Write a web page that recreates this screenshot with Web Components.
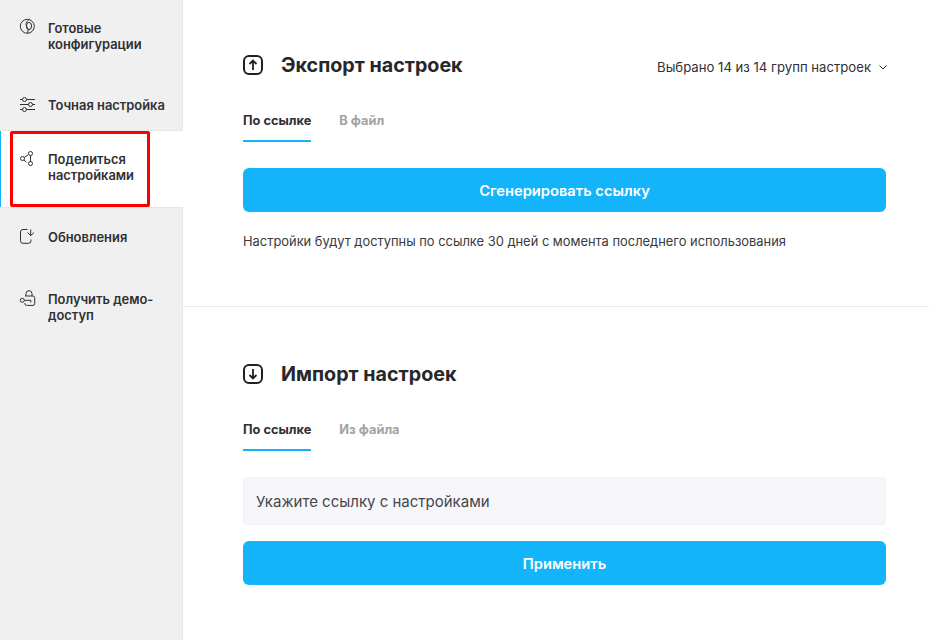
<!DOCTYPE html>
<html lang="ru">
<head>
<meta charset="utf-8">
<title>Настройки</title>
<style>
    html, body {
        margin: 0;
        height: 100%;
    }

    body {
        font-family: Inter, "Noto Sans", sans-serif;
        color: #26272b;
        overflow: hidden;
    }
</style>
</head>
<body>
<settings-page>
    <side-nav>
        <nav-item>
            <svg slot="icon" width="18" height="18" viewBox="0 0 18 18" fill="none" stroke="currentColor" stroke-width="1"><circle cx="7.300" cy="6.300" r="7"/><ellipse cx="9" cy="6" rx="2.600" ry="3.600"/><path d="M9.500 -.5C6.500 1 5.500 3.500 6.500 6s2.500 4 1 7"/></svg>
            Готовые<br>конфигурации
        </nav-item>
        <nav-item>
            <svg slot="icon" width="18" height="18" viewBox="0 0 18 18" fill="none" stroke="currentColor" stroke-width="1"><path d="M0 2.500h2.500M6.500 2.500H15M0 7.500h8.500M12.500 7.500H15M0 12.500h2.500M6.500 12.500H15"/><circle cx="4.500" cy="2.500" r="2"/><circle cx="10.500" cy="7.500" r="2"/><circle cx="4.500" cy="12.500" r="2"/></svg>
            Точная настройка
        </nav-item>
        <nav-item active>
            <svg slot="icon" width="18" height="18" viewBox="0 0 18 18" fill="none" stroke="currentColor" stroke-width="1"><circle cx="2.500" cy="7.500" r="2"/><circle cx="10.500" cy="2.500" r="2"/><circle cx="10.500" cy="12.500" r="2"/><path d="M4.200 6.400 8 4M4 9l2.500 2.300M10.500 4.500v6"/></svg>
            Поделиться<br>настройками
        </nav-item>
        <nav-item>
            <svg slot="icon" width="18" height="18" viewBox="0 0 18 18" fill="none" stroke="currentColor" stroke-width="1"><path d="M7.500 .5H3a2.500 2.500 0 0 0-2.500 2.500v8.800a2.500 2.500 0 0 0 2.500 2.500h5.500a2.500 2.500 0 0 0 2.500-2.500V10.500"/><path d="M10.700 .5V6.500M7.500 3.500l3.200 3.200L14 3.500"/></svg>
            Обновления
        </nav-item>
        <nav-item>
            <svg slot="icon" width="18" height="18" viewBox="0 0 18 18" fill="none" stroke="currentColor" stroke-width="1"><path d="M6 5V2.700a3 3 0 0 1 6 0V5"/><path d="M5 5h8a1.700 1.700 0 0 1 1.700 1.700v6a1.700 1.700 0 0 1-1.700 1.700H6.500a1.500 1.500 0 0 1-1.500-1.500v-.9"/><circle cx="2.300" cy="9.300" r="2"/><path d="M4.300 9.300h6.500v2.200"/></svg>
            Получить демо-<br>доступ
        </nav-item>
        <red-frame></red-frame>
    </side-nav>
    <main-panel>
        <share-section heading="Экспорт настроек" tab-a="По ссылке" tab-b="В файл">
            <svg slot="icon" width="20" height="20" viewBox="0 0 20 20" fill="none" stroke="currentColor" stroke-width="2"><rect x="1" y="1" width="18" height="18" rx="5"/><path d="M10 15V6M6.500 9 10 5.500 13.500 9" stroke-width="1.800"/></svg>
            <group-picker slot="aside">Выбрано 14 из 14 групп настроек</group-picker>
            <action-button>Сгенерировать ссылку</action-button>
            <p style="margin: 22px 0 0; font-size: 12.900px; line-height: 16px; color: #3a3b40;">Настройки будут доступны по ссылке 30 дней с момента последнего использования</p>
        </share-section>
        <share-section heading="Импорт настроек" tab-a="По ссылке" tab-b="Из файла" class="second">
            <svg slot="icon" width="20" height="20" viewBox="0 0 20 20" fill="none" stroke="currentColor" stroke-width="2"><rect x="1" y="1" width="18" height="18" rx="5"/><path d="M10 5v9M6.500 11 10 14.500 13.500 11" stroke-width="1.800"/></svg>
            <link-field>Укажите ссылку с настройками</link-field>
            <action-button style="margin-top: 16px;">Применить</action-button>
        </share-section>
    </main-panel>
</settings-page>

<script>
class SettingsPage extends HTMLElement {
    constructor() {
        super();
        this.attachShadow({ mode: "open" });
        this.shadowRoot.innerHTML = `
            <style>
                :host {
                    display: flex;
                    width: 100%;
                    height: 640px;
                }
            </style>
            <slot></slot>
        `;
    }
}

class SideNav extends HTMLElement {
    constructor() {
        super();
        this.attachShadow({ mode: "open" });
        this.shadowRoot.innerHTML = `
            <style>
                :host {
                    display: block;
                    position: relative;
                    box-sizing: border-box;
                    flex: 0 0 183px;
                    width: 183px;
                    background: #f0f0f0;
                    border-right: 1px solid #e6e6e6;
                }

                ::slotted(nav-item:nth-of-type(4)) {
                    margin-top: 1px;
                }

                ::slotted(nav-item:nth-of-type(5)) {
                    margin-top: -1px;
                }
            </style>
            <slot></slot>
        `;
    }
}

class NavItem extends HTMLElement {
    constructor() {
        super();
        this.attachShadow({ mode: "open" });
        this.shadowRoot.innerHTML = `
            <style>
                :host {
                    display: flex;
                    gap: 10px;
                    box-sizing: border-box;
                    padding: 20px 10px 25px 20px;
                    font-size: 12.900px;
                    font-weight: 600;
                    line-height: 16px;
                    color: #2f3035;
                }

                :host([active]) {
                    position: relative;
                    width: 183px;
                    margin-top: -10px;
                    padding-bottom: 24px;
                    background: #fff;
                    border-top: 1px solid #e6e6e6;
                    border-bottom: 1px solid #e6e6e6;
                    box-shadow: inset 1px 0 0 #14b4fa;
                }

                .icon {
                    flex: none;
                    width: 18px;
                    height: 18px;
                }

                .label {
                    padding-top: 1px;
                    margin-bottom: -1px;
                }

                ::slotted(svg) {
                    display: block;
                    overflow: visible;
                }
            </style>
            <div class="icon"><slot name="icon"></slot></div>
            <div class="label"><slot></slot></div>
        `;
    }
}

class RedFrame extends HTMLElement {
    constructor() {
        super();
        this.attachShadow({ mode: "open" });
        this.shadowRoot.innerHTML = `
            <style>
                :host {
                    position: absolute;
                    left: 10px;
                    top: 131px;
                    width: 140px;
                    height: 76px;
                    box-sizing: border-box;
                    border: 3px solid #f00;
                    border-radius: 2px;
                }
            </style>
        `;
    }
}

class MainPanel extends HTMLElement {
    constructor() {
        super();
        this.attachShadow({ mode: "open" });
        this.shadowRoot.innerHTML = `
            <style>
                :host {
                    display: block;
                    flex: 1;
                    min-width: 0;
                    background: #fff;
                }
            </style>
            <slot></slot>
        `;
    }
}

class ShareSection extends HTMLElement {
    constructor() {
        super();
        this.attachShadow({ mode: "open" });
        this.shadowRoot.innerHTML = `
            <style>
                :host {
                    display: block;
                    box-sizing: border-box;
                    padding: 52px 43px 0 60px;
                    height: 306px;
                }

                :host(.second) {
                    height: auto;
                    border-top: 1px solid #e8e8e8;
                    padding-top: 54px;
                }

                .head {
                    display: flex;
                    align-items: center;
                    height: 26px;
                }

                .icon {
                    display: flex;
                    width: 38px;
                    color: #1f2024;
                }

                h2 {
                    flex: 1;
                    margin: 0;
                    font-size: 19.700px;
                    font-weight: 700;
                    line-height: 26px;
                    color: #26272b;
                }

                .tabs {
                    display: flex;
                    gap: 28px;
                    margin-top: 22px;
                    font-size: 12.800px;
                    font-weight: 700;
                    line-height: 16px;
                }

                .tab {
                    padding: 13px 0 11px;
                    color: #a3a3a3;
                }

                .tab.on {
                    color: #2f3035;
                    border-bottom: 2px solid #14b4fa;
                }

                .body {
                    margin-top: 26px;
                }
            </style>
            <div class="head">
                <span class="icon"><slot name="icon"></slot></span>
                <h2></h2>
                <slot name="aside"></slot>
            </div>
            <div class="tabs">
                <span class="tab on"></span>
                <span class="tab"></span>
            </div>
            <div class="body"><slot></slot></div>
        `;
        this.shadowRoot.querySelector("h2").textContent = this.getAttribute("heading");
        const tabs = this.shadowRoot.querySelectorAll(".tab");
        tabs[0].textContent = this.getAttribute("tab-a");
        tabs[1].textContent = this.getAttribute("tab-b");
    }
}

class GroupPicker extends HTMLElement {
    constructor() {
        super();
        this.attachShadow({ mode: "open" });
        this.shadowRoot.innerHTML = `
            <style>
                :host {
                    display: flex;
                    align-items: center;
                    gap: 8px;
                    margin-top: 4px;
                    margin-right: -1px;
                    font-size: 13.150px;
                    color: #2f3035;
                }
            </style>
            <slot></slot>
            <svg width="8" height="5" viewBox="0 0 8 5" fill="none" stroke="currentColor"><path d="M.5 .5 4 4 7.500 .5"/></svg>
        `;
    }
}

class ActionButton extends HTMLElement {
    constructor() {
        super();
        this.attachShadow({ mode: "open" });
        this.shadowRoot.innerHTML = `
            <style>
                :host {
                    display: flex;
                    align-items: center;
                    justify-content: center;
                    box-sizing: border-box;
                    height: 44px;
                    padding-top: 1px;
                    border-radius: 6px;
                    background: #14b4fa;
                    color: #fff;
                    font-size: 14.700px;
                    font-weight: 600;
                }
            </style>
            <slot></slot>
        `;
    }
}

class LinkField extends HTMLElement {
    constructor() {
        super();
        this.attachShadow({ mode: "open" });
        this.shadowRoot.innerHTML = `
            <style>
                :host {
                    display: flex;
                    align-items: center;
                    box-sizing: border-box;
                    height: 48px;
                    padding: 0 12px;
                    border-radius: 4px;
                    background: #f6f6fb;
                    border: 1px solid #f0f0f5;
                    font-size: 15px;
                    color: #45464b;
                }
            </style>
            <slot></slot>
        `;
    }
}

customElements.define("settings-page", SettingsPage);
customElements.define("side-nav", SideNav);
customElements.define("nav-item", NavItem);
customElements.define("red-frame", RedFrame);
customElements.define("main-panel", MainPanel);
customElements.define("share-section", ShareSection);
customElements.define("group-picker", GroupPicker);
customElements.define("action-button", ActionButton);
customElements.define("link-field", LinkField);
</script>
</body>
</html>
